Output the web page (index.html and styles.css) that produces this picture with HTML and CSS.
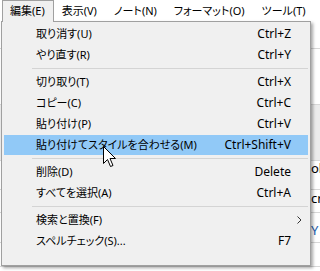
FILE: index.html
```html
<!DOCTYPE html>
<html lang="ja">
<head>
    <meta charset="UTF-8">
    <title>編集メニュー</title>
    <link rel="stylesheet" href="styles.css">
</head>
<body>
    <!-- Barre de menu -->
    <div class="menubar">
        <div class="bar-item open">編集(E)</div>
        <div class="bar-item">表示(V)</div>
        <div class="bar-item">ノート(N)</div>
        <div class="bar-item">フォーマット(O)</div>
        <div class="bar-item">ツール(T)</div>
        <div class="bar-item">ヘルプ(H)</div>
    </div>

    <!-- Fenêtre derrière le menu -->
    <div class="backdrop">
        <div class="bg-row top"></div>
        <div class="bg-row mid"></div>
        <div class="bg-row shade"></div>
        <div class="bg-row text ok">ok</div>
        <div class="bg-row text cro">cro</div>
        <div class="bg-row text blue">Y H</div>
        <div class="bg-row"></div>
    </div>

    <!-- Menu déroulant -->
    <div class="dropdown">
        <div class="menu-row"><span>取り消す(U)</span><span class="key">Ctrl+Z</span><span></span></div>
        <div class="menu-row"><span>やり直す(R)</span><span class="key">Ctrl+Y</span><span></span></div>
        <div class="sep"></div>
        <div class="menu-row"><span>切り取り(T)</span><span class="key">Ctrl+X</span><span></span></div>
        <div class="menu-row"><span>コピー(C)</span><span class="key">Ctrl+C</span><span></span></div>
        <div class="menu-row"><span>貼り付け(P)</span><span class="key">Ctrl+V</span><span></span></div>
        <div class="menu-row active"><span>貼り付けてスタイルを合わせる(M)</span><span class="key">Ctrl+Shift+V</span><span></span></div>
        <div class="sep"></div>
        <div class="menu-row"><span>削除(D)</span><span class="key">Delete</span><span></span></div>
        <div class="menu-row"><span>すべてを選択(A)</span><span class="key">Ctrl+A</span><span></span></div>
        <div class="sep"></div>
        <div class="menu-row"><span>検索と置換(F)</span><span class="key"></span>
            <svg class="arrow" width="5" height="8" viewBox="0 0 5 8"><path d="M0.5 0.5 L4 4 L0.5 7.5" fill="none" stroke="#333" stroke-width="1"/></svg>
        </div>
        <div class="menu-row"><span>スペルチェック(S)...</span><span class="key">F7</span><span></span></div>
    </div>

    <!-- Curseur de la souris -->
    <svg class="cursor" width="14" height="22" viewBox="0 0 14 22">
        <path d="M0.5 0.5 V17.5 L4.5 13.5 L7.5 20.5 L10 19.5 L7 12.5 H12.5 Z" fill="#fff" stroke="#000" stroke-width="1"/>
    </svg>
</body>
</html>
```

FILE: styles.css
```css
* {
    margin: 0;
    padding: 0;
    box-sizing: border-box;
}

body {
    font-family: "Noto Sans", "Noto Sans CJK JP", sans-serif;
    font-size: 11px;
    font-feature-settings: "palt";
    color: #000;
    background: #fff;
    width: 320px;
    height: 271px;
    overflow: hidden;
    position: relative;
}

/* Barre de menu */
.menubar {
    display: flex;
    height: 21px;
    padding-left: 2px;
    background: #fff;
    white-space: nowrap;
}

.bar-item {
    padding: 0 8px 0 7px;
    line-height: 20px;
    border: 1px solid transparent;
}

.bar-item.open {
    height: 22px;
    background: #f0f0f0;
    border-color: #a0a0a0;
    border-bottom: none;
    position: relative;
    z-index: 2;
}

/* Fenêtre derrière */
.backdrop {
    display: flex;
    flex-direction: column;
}

.bg-row {
    height: 24px;
    border-bottom: 1px solid #d8d8d8;
    padding-left: 311px;
    white-space: nowrap;
    font-size: 13px;
    line-height: 14px;
}

.bg-row.top { height: 28px; }
.bg-row.mid { height: 56px; }
.bg-row.shade { height: 56px; background: #ececec; }
.bg-row.ok { height: 29px; }
.bg-row.cro { height: 23px; padding-top: 1px; }
.bg-row.blue { height: 30px; padding-top: 10px; color: #1c5fb0; }

/* Menu déroulant */
.dropdown {
    position: absolute;
    left: 1px;
    top: 21px;
    width: 310px;
    height: 245px;
    background: #f0f0f0;
    border: 1px solid #a0a0a0;
    padding: 1px 2px;
    box-shadow: 2px 2px 3px rgba(0, 0, 0, 0.35);
    z-index: 1;
}

.menu-row {
    display: grid;
    grid-template-columns: 1fr auto 17px;
    align-items: center;
    height: 20px;
    margin: 1px 0;
    padding-left: 32px;
    line-height: 20px;
    white-space: nowrap;
}

.menu-row.active {
    background: #91c9f7;
}

.key {
    text-align: right;
    font-size: 12px;
}

.arrow {
    justify-self: center;
}

.sep {
    height: 1px;
    margin: 3px 0 3px 28px;
    background: #d4d4d4;
}

/* Curseur */
.cursor {
    position: absolute;
    left: 103px;
    top: 146px;
    z-index: 3;
}
```
